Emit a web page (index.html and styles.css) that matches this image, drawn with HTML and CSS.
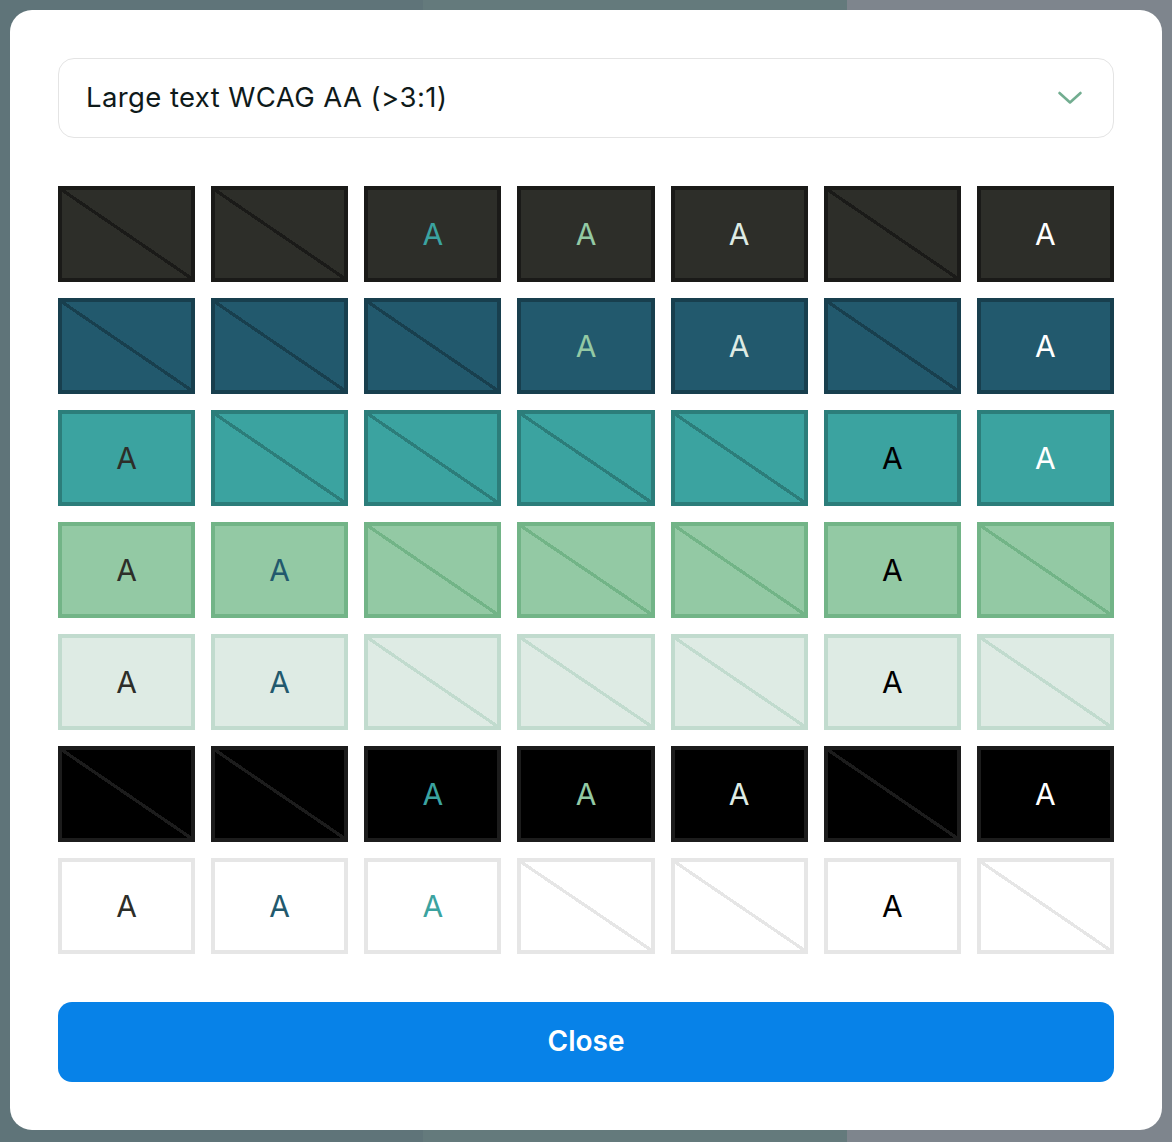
FILE: index.html
```html
<!DOCTYPE html>
<html lang="en">
<head>
<meta charset="utf-8">
<title>Contrast grid</title>
<link rel="stylesheet" href="styles.css">
</head>
<body>
<div class="modal">
  <div class="select">
    <span class="select-label">Large text WCAG AA (&gt;3:1)</span>
    <svg class="chevron" width="26" height="16" viewBox="0 0 26 16"><polyline points="2.5,3 13,12.5 23.5,3" fill="none" stroke="#72ad90" stroke-width="2.6" stroke-linecap="round" stroke-linejoin="round"/></svg>
  </div>
  <div class="grid">
    <div class="cell r1 x"></div><div class="cell r1 x"></div><div class="cell r1 c3">A</div><div class="cell r1 c4">A</div><div class="cell r1 c5">A</div><div class="cell r1 x"></div><div class="cell r1 c7">A</div>
    <div class="cell r2 x"></div><div class="cell r2 x"></div><div class="cell r2 x"></div><div class="cell r2 c4">A</div><div class="cell r2 c5">A</div><div class="cell r2 x"></div><div class="cell r2 c7">A</div>
    <div class="cell r3 c1">A</div><div class="cell r3 x"></div><div class="cell r3 x"></div><div class="cell r3 x"></div><div class="cell r3 x"></div><div class="cell r3 c6">A</div><div class="cell r3 c7">A</div>
    <div class="cell r4 c1">A</div><div class="cell r4 c2">A</div><div class="cell r4 x"></div><div class="cell r4 x"></div><div class="cell r4 x"></div><div class="cell r4 c6">A</div><div class="cell r4 x"></div>
    <div class="cell r5 c1">A</div><div class="cell r5 c2">A</div><div class="cell r5 x"></div><div class="cell r5 x"></div><div class="cell r5 x"></div><div class="cell r5 c6">A</div><div class="cell r5 x"></div>
    <div class="cell r6 x"></div><div class="cell r6 x"></div><div class="cell r6 c3">A</div><div class="cell r6 c4">A</div><div class="cell r6 c5">A</div><div class="cell r6 x"></div><div class="cell r6 c7">A</div>
    <div class="cell r7 c1">A</div><div class="cell r7 c2">A</div><div class="cell r7 c3">A</div><div class="cell r7 x"></div><div class="cell r7 x"></div><div class="cell r7 c6">A</div><div class="cell r7 x"></div>
  </div>
  <button class="close-btn">Close</button>
</div>
</body>
</html>
```
FILE: styles.css
```css
html, body {
  margin: 0;
  padding: 0;
}
body {
  width: 1172px;
  height: 1142px;
  background: linear-gradient(to right, #5f7479 0, #5f7479 423px, #647a7c 423px, #647a7c 847px, #7e858d 847px, #7e858d 100%);
  font-family: "Inter", "Open Sans", sans-serif;
  padding: 10px;
  box-sizing: border-box;
}
.modal {
  width: 1152px;
  height: 1120px;
  background: #fff;
  border-radius: 22px;
  padding: 48px;
  box-sizing: border-box;
  display: flex;
  flex-direction: column;
  gap: 48px;
}
.select {
  height: 80px;
  border: 1px solid #e4e4e4;
  border-radius: 16px;
  box-sizing: border-box;
  display: flex;
  align-items: center;
  justify-content: space-between;
  padding: 0 30px 0 27px;
}
.select-label {
  font-size: 27.5px;
  color: #0f1a1a;
  letter-spacing: 0.4px;
  margin-top: -2px;
}
.chevron {
  display: block;
}
.grid {
  display: grid;
  grid-template-columns: repeat(7, 1fr);
  grid-auto-rows: 96px;
  gap: 16px 16px;
}
.cell {
  border: 4px solid var(--bd);
  background-color: var(--bg);
  display: flex;
  align-items: center;
  justify-content: center;
  font-size: 30px;
  line-height: 1;
}
.cell.x {
  background-image: linear-gradient(to top right, transparent calc(50% - 1.6px), var(--bd) calc(50% - 1.6px), var(--bd) calc(50% + 1.6px), transparent calc(50% + 1.6px));
}
.r1 { --bg: #2d2e29; --bd: #1a1a18; }
.r2 { --bg: #22596d; --bd: #183f4e; }
.r3 { --bg: #3ba3a0; --bd: #2c7d7a; }
.r4 { --bg: #93c9a4; --bd: #72b487; }
.r5 { --bg: #deebe4; --bd: #c1dbce; }
.r6 { --bg: #000000; --bd: #1c1c1c; }
.r7 { --bg: #ffffff; --bd: #e6e6e6; }
.c1 { color: #2d2e29; }
.c2 { color: #22596d; }
.c3 { color: #3ba3a0; }
.c4 { color: #93c9a4; }
.c5 { color: #deebe4; }
.c6 { color: #000000; }
.c7 { color: #ffffff; }
.close-btn {
  height: 80px;
  border: none;
  border-radius: 14px;
  background: #0782e8;
  color: #fff;
  font-family: "Inter", "Open Sans", sans-serif;
  font-size: 28px;
  font-weight: 600;
  padding-bottom: 3px;
  cursor: pointer;
}
```
